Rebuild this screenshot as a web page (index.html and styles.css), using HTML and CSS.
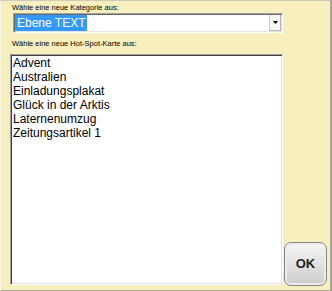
FILE: index.html
```html
<!DOCTYPE html>
<html>
  <head>
    <title>Hot-Spot-Karte wählen</title>
    <meta name="viewport" content="width=device-width, initial-scale=1.0" />
    <link rel="stylesheet" href="styles.css">
  </head>

  <body>
    <div class="dialog">
      <!-- Kategorie -->
      <div class="label">Wähle eine neue Kategorie aus:</div>
      <div class="combo" role="combobox" aria-label="Kategorie">
        <span class="combo-value">Ebene TEXT</span>
        <span class="combo-arrow">
          <svg width="5" height="3" viewBox="0 0 5 3"><path d="M0 0h5L2.5 3z" fill="#000"/></svg>
        </span>
      </div>

      <!-- Hot-Spot-Karte -->
      <div class="label label-list">Wähle eine neue Hot-Spot-Karte aus:</div>
      <div class="bottom-row">
        <ul class="listbox" role="listbox">
          <li>Advent</li>
          <li>Australien</li>
          <li>Einladungsplakat</li>
          <li>Glück in der Arktis</li>
          <li>Laternenumzug</li>
          <li>Zeitungsartikel 1</li>
        </ul>
        <button class="ok-button">OK</button>
      </div>
    </div>
  </body>
</html>
```

FILE: styles.css
```css
/* Dialog zum Wechseln der Hot-Spot-Karte */
body {
  margin: 0;
  padding: 0;
  font-family: "Liberation Sans", Arial, sans-serif;
}

.dialog {
  box-sizing: border-box;
  width: 332px;
  height: 291px;
  padding: 2px 0 0 9px;
  background-color: #f7efbd;
  border-top: 1px solid #cfcabb;
  border-left: 1px solid #fbf8e8;
  border-right: 2px solid #a6a39a;
  border-bottom: 1px solid #a6a39a;
}

.label {
  margin-left: 2px;
  font-size: 7.5px;
  line-height: 9px;
  color: #000;
}

.label-list {
  margin-top: 6px;
}

.combo {
  box-sizing: border-box;
  display: flex;
  width: 270px;
  height: 20px;
  margin: 1px 0 0 3px;
  background-color: white;
  border-top: 1px solid #a0a0a0;
  border-left: 1px solid #a0a0a0;
  border-right: 1px solid #ffffff;
  border-bottom: 1px solid #ffffff;
  box-shadow: inset 1px 1px 0 #696969, inset -1px -1px 0 #e3e3e3;
  padding: 1px;
}

.combo-value {
  padding: 0 2px;
  font-size: 12px;
  line-height: 16px;
  color: white;
  background-color: #3399ff;
}

.combo-arrow {
  box-sizing: border-box;
  display: flex;
  align-items: center;
  justify-content: center;
  width: 12px;
  height: 16px;
  margin-left: auto;
  background-color: #f8f8f8;
  border-left: 1px solid #c8c8c8;
  border-right: 1px solid #b4b4b4;
  border-bottom: 1px solid #b4b4b4;
}

.bottom-row {
  display: grid;
  grid-template-columns: 273px 43px;
  column-gap: 1px;
  margin-top: 6px;
}

.listbox {
  box-sizing: border-box;
  height: 231px;
  margin: 0;
  padding: 1px 0 0 1px;
  list-style: none;
  background-color: white;
  border-top: 1px solid #a0a0a0;
  border-left: 1px solid #a0a0a0;
  border-right: 1px solid #ffffff;
  border-bottom: 1px solid #ffffff;
  box-shadow: inset 1px 1px 0 #404040, inset -1px -1px 0 #e3e3e3;
  font-size: 12px;
  line-height: 14px;
  color: #000;
}

.listbox li {
  padding-left: 1px;
}

.ok-button {
  align-self: end;
  width: 43px;
  height: 44px;
  margin-bottom: -1px;
  padding: 0 0 2px;
  border: 1px solid #858585;
  border-radius: 7px;
  background: linear-gradient(#f6f6f6, #e2e2e2 50%, #cbcbcb);
  box-shadow: inset 0 0 0 2px #ececec;
  font-family: "Liberation Sans", Arial, sans-serif;
  font-size: 13px;
  font-weight: bold;
  color: #222;
  cursor: pointer;
}
```
